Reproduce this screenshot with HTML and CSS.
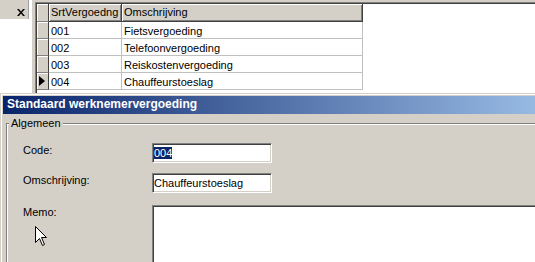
FILE: index.html
```html
<!DOCTYPE html>
<html lang="nl">
  <head>
    <meta charset="UTF-8" />
    <title>Standaard werknemervergoeding</title>
    <link rel="stylesheet" href="styles.css">
  </head>
  <body>
    <!-- Overview: side pane + grid -->
    <div class="top">
      <div class="side">
        <div class="side-head">
          <svg class="close" width="8" height="7" viewBox="0 0 8 7">
            <path d="M0 0h2l2 2.5 2-2.5h2l-3 3.5 3 3.5h-2l-2-2.5-2 2.5h-2l3-3.5z" fill="#000" />
          </svg>
        </div>
      </div>
      <div class="grid">
        <table class="tbl">
          <tr>
            <th class="ind"></th>
            <th class="c1">SrtVergoedng</th>
            <th class="c2">Omschrijving</th>
          </tr>
          <tr><td class="ind"></td><td>001</td><td>Fietsvergoeding</td></tr>
          <tr><td class="ind"></td><td>002</td><td>Telefoonvergoeding</td></tr>
          <tr><td class="ind"></td><td>003</td><td>Reiskostenvergoeding</td></tr>
          <tr><td class="ind"><span class="current"></span></td><td>004</td><td>Chauffeurstoeslag</td></tr>
        </table>
      </div>
    </div>

    <!-- Detail dialog -->
    <div class="dialog">
      <div class="titlebar">Standaard werknemervergoeding</div>
      <fieldset class="group">
        <legend>Algemeen</legend>
        <div class="row">
          <label>Code:</label>
          <div class="edit"><span class="sel">004</span></div>
        </div>
        <div class="row">
          <label>Omschrijving:</label>
          <div class="edit">Chauffeurstoeslag</div>
        </div>
        <div class="row row-memo">
          <label>Memo:</label>
          <div class="memo"></div>
        </div>
      </fieldset>
    </div>

    <svg class="cursor" width="13" height="21" viewBox="0 0 13 21">
      <path d="M0.5 0.5V16.5L4.5 12.5L7.5 19.5L9.5 18.5L6.5 11.5H11.5Z" fill="#fff" stroke="#000" stroke-width="1" />
    </svg>
  </body>
</html>
```

FILE: styles.css
```css
* {
  box-sizing: border-box;
}

body {
  margin: 0;
  width: 535px;
  height: 262px;
  overflow: hidden;
  position: relative;
  font-family: "Liberation Sans", Arial, sans-serif;
  font-size: 11px;
  line-height: 13px;
  color: #000;
  background: #d4d0c8;
}

/* top part */
.top {
  display: flex;
  height: 93px;
  background: #d4d0c8;
}

.side {
  width: 32px;
  background: #fff;
}

.side-head {
  width: 29px;
  height: 19px;
  background: #d4d0c8;
  border-right: 1px solid #a0a0a0;
  display: flex;
  justify-content: flex-end;
  padding: 9px 3px 0 0;
}

.close {
  display: block;
}

.grid {
  flex: 1;
  margin: 2px 0 0 3px;
  background: #fff;
  border-top: 1px solid #808080;
  border-left: 1px solid #808080;
  box-shadow: inset 1px 1px 0 #404040;
  padding: 1px 0 0 1px;
}

.tbl {
  border-collapse: separate;
  border-spacing: 0;
  table-layout: fixed;
  width: 326px;
}

.tbl th,
.tbl td {
  height: 17px;
  padding: 3px 2px 0 2px;
  text-align: left;
  vertical-align: top;
  font-weight: normal;
  white-space: nowrap;
  overflow: hidden;
}

.tbl th {
  height: 18px;
  padding-top: 2px;
  background: #d4d0c8;
  border-right: 1px solid #404040;
  border-bottom: 1px solid #404040;
  box-shadow: inset 1px 1px 0 #fff, inset -1px -1px 0 #808080;
}

.tbl td {
  border-right: 1px solid #c0c0c0;
  border-bottom: 1px solid #c0c0c0;
}

.tbl .ind {
  width: 12px;
  padding: 0 0 0 2px;
  background: #d4d0c8;
  border-right: 1px solid #404040;
  border-bottom: 1px solid #808080;
  box-shadow: inset 1px 1px 0 #fff;
}

.tbl .c1 {
  width: 73px;
}

.tbl .c2 {
  width: 241px;
}

.current {
  display: block;
  width: 0;
  height: 0;
  margin-top: 3px;
  border-left: 6px solid #000;
  border-top: 5px solid transparent;
  border-bottom: 5px solid transparent;
}

/* dialog */
.dialog {
  height: 169px;
  overflow: hidden;
  border-top: 1px solid #d4d0c8;
  border-left: 1px solid #d4d0c8;
  padding: 2px 0 0 2px;
  box-shadow: inset 1px 1px 0 #fff;
}

.titlebar {
  height: 18px;
  padding: 2px 0 0 4px;
  font-size: 12px;
  font-weight: bold;
  color: #fff;
  white-space: nowrap;
  background: linear-gradient(to right, #0a246a 0, #a6caf0 590px);
}

.group {
  margin: 3px 0 0 3px;
  padding: 13px 0 0 2px;
  min-width: 0;
  height: 200px;
  border: 0;
  border-top: 1px solid #808080;
  border-left: 1px solid #808080;
  box-shadow: inset 1px 1px 0 #fff;
}

.group legend {
  padding: 0 2px;
  line-height: 13px;
  background: #d4d0c8;
}

.row {
  display: flex;
  align-items: flex-start;
  padding-left: 14px;
}

.row + .row {
  margin-top: 10px;
}

.row.row-memo {
  margin-top: 12px;
}

.row label {
  width: 129px;
  flex: none;
  padding-top: 1px;
}

.edit,
.memo {
  background: #fff;
  border: 1px solid;
  border-color: #808080 #fff #fff #808080;
  box-shadow: inset 1px 1px 0 #404040, inset -1px -1px 0 #d4d0c8;
}

.edit {
  width: 120px;
  height: 20px;
  padding: 3px 0 0 1px;
  white-space: nowrap;
}

.sel {
  background: #0a246a;
  color: #fff;
}

.memo {
  flex: none;
  width: 400px;
  height: 80px;
}

.cursor {
  position: absolute;
  left: 35px;
  top: 226px;
}
```
